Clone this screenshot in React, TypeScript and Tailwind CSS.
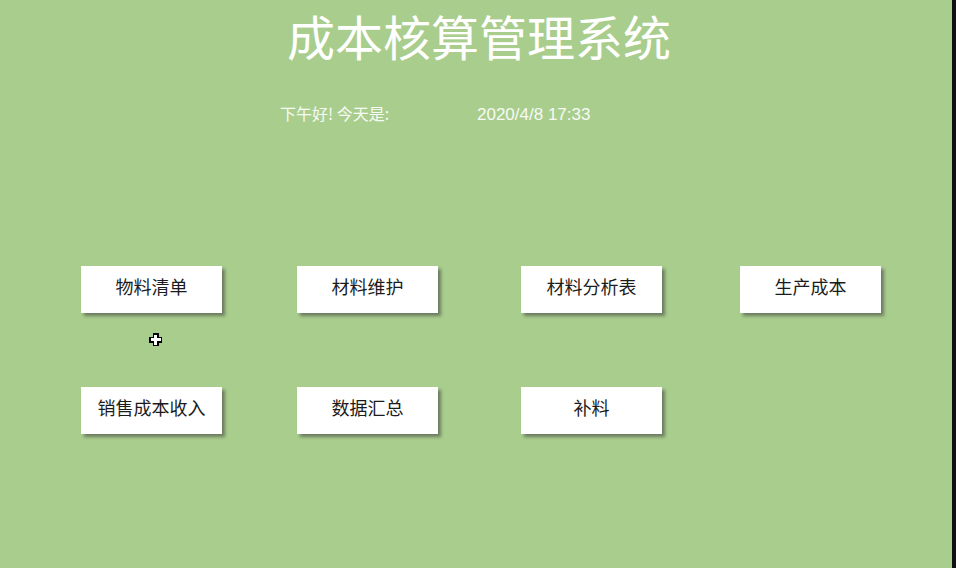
import React from "react";

// Main menu of the cost accounting system
const rows: string[][] = [
  ["物料清单", "材料维护", "材料分析表", "生产成本"],
  ["销售成本收入", "数据汇总", "补料"],
];

const cjk = { fontFamily: '"Noto Sans CJK SC", "Noto Sans", sans-serif' };

function MenuButton({ label }: { label: string }) {
  return (
    <button
      type="button"
      className="w-[141px] h-[47px] bg-white text-[18px] text-[#1c1c1c] pb-[6px] shadow-[3px_3px_3px_rgba(60,60,60,0.55)]"
      style={cjk}
    >
      {label}
    </button>
  );
}

function Cursor() {
  // the little white move/plus cursor shown in the screenshot
  return (
    <svg
      className="absolute left-[149px] top-[333px]"
      width="13"
      height="13"
      viewBox="0 0 13 13"
      shapeRendering="crispEdges"
    >
      <path d="M3.5 0h6v3.5h3.5v6h-3.5v3.5h-6v-3.5h-3.5v-6h3.5z" fill="#000" />
      <path d="M5 1.5h3v3.5h3.5v3h-3.5v3.5h-3v-3.5h-3.5v-3h3.5z" fill="#fff" />
    </svg>
  );
}

export default function App() {
  return (
    <div className="relative flex w-full h-[568px] overflow-hidden bg-[#a9cd8d]">
      <div className="flex-1 flex flex-col">
        <h1
          className="pt-[11px] pl-[6px] text-center text-[48px] leading-[48px] font-normal text-white"
          style={cjk}
        >
          成本核算管理系统
        </h1>

        <div
          className="mt-[44px] flex items-baseline pl-[280px] text-[16px] leading-[20px] text-white/90"
          style={cjk}
        >
          <span className="w-[197px]">下午好! 今天是:</span>
          <span
            className="text-[17px]"
            style={{ fontFamily: '"Liberation Sans", Arial, sans-serif' }}
          >
            2020/4/8 17:33
          </span>
        </div>

        <div className="mt-[141px] pl-[81px] flex flex-col gap-[74px]">
          {rows.map((row, i) => (
            <div key={i} className="grid grid-cols-[216px_224px_219px_141px]">
              {row.map((label) => (
                <MenuButton key={label} label={label} />
              ))}
            </div>
          ))}
        </div>
      </div>
      <div className="w-[4px] bg-[#111]" />
      <Cursor />
    </div>
  );
}
